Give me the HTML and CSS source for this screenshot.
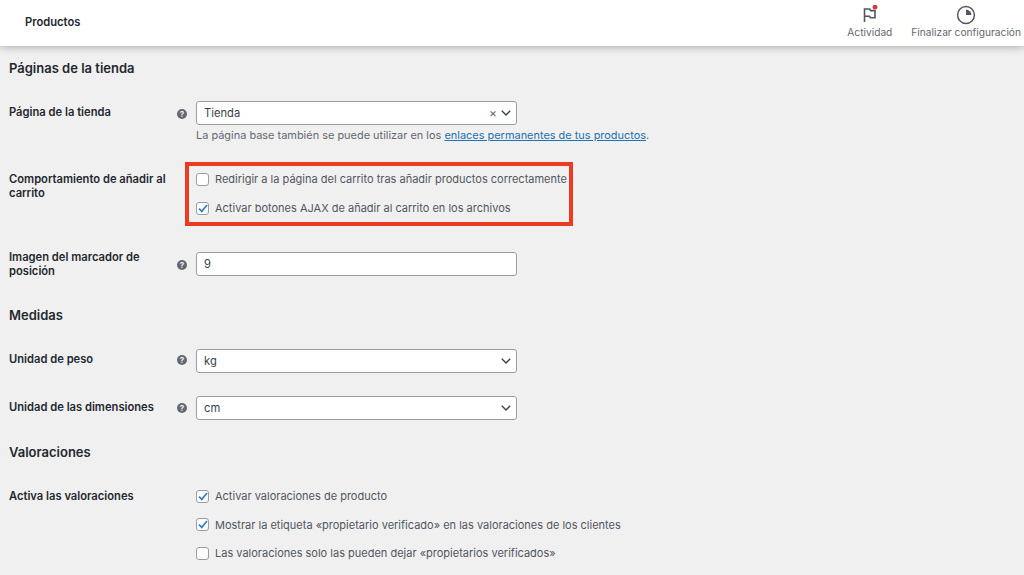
FILE: index.html
```html
<!DOCTYPE html>
<html lang="es">
<head>
<meta charset="utf-8">
<title>Productos</title>
<link rel="stylesheet" href="styles.css">
</head>
<body>
<header class="topbar">
  <h1 class="page-title">Productos</h1>
  <nav class="activity">
    <div class="activity-item item-a">
      <svg class="act-icon" width="20" height="20" viewBox="0 0 20 20" fill="none">
        <path d="M4.5 17V4h5.2l.8 1.6h4.5v7.2h-4.6l-.8-1.6H5" stroke="#50575e" stroke-width="1.6" fill="none"/>
        <circle cx="15" cy="2.2" r="2.4" fill="#d5383a"/>
      </svg>
      <span>Actividad</span>
    </div>
    <div class="activity-item item-b">
      <svg class="act-icon" width="20" height="20" viewBox="0 0 20 20" fill="none">
        <circle cx="10" cy="10" r="8.4" stroke="#50575e" stroke-width="1.5"/>
        <path d="M10 4.6a5.4 5.4 0 0 1 5.4 5.4H10z" fill="#50575e"/>
      </svg>
      <span>Finalizar configuración</span>
    </div>
  </nav>
</header>
<main class="content">
  <h2 class="section first">Páginas de la tienda</h2>
  <div class="row row-shop">
    <div class="label">Página de la tienda</div>
    <div class="help"><span class="help-icon">?</span></div>
    <div class="field">
      <div class="select"><span class="select-value">Tienda</span><span class="clear">×</span><svg class="chev" width="10" height="6" viewBox="0 0 10 6"><path d="M.8.8 5 5 9.2.8" stroke="#3c434a" stroke-width="1.4" fill="none"/></svg></div>
      <p class="desc">La página base también se puede utilizar en los <a href="#">enlaces permanentes de tus productos</a>.</p>
    </div>
  </div>
  <div class="row row-cart">
    <div class="label">Comportamiento de añadir al carrito</div>
    <div class="help"></div>
    <div class="field checks">
      <label class="check"><span class="box"></span>Redirigir a la página del carrito tras añadir productos correctamente</label>
      <label class="check"><span class="box on"><svg width="10" height="9" viewBox="0 0 10 9"><path d="M1 4.6 3.8 7.4 9 1" stroke="#3582c4" stroke-width="1.8" fill="none"/></svg></span>Activar botones AJAX de añadir al carrito en los archivos</label>
      <div class="highlight"></div>
    </div>
  </div>
  <div class="row row-image">
    <div class="label">Imagen del marcador de posición</div>
    <div class="help"><span class="help-icon">?</span></div>
    <div class="field"><div class="input">9</div></div>
  </div>
  <h2 class="section measures">Medidas</h2>
  <div class="row row-weight">
    <div class="label">Unidad de peso</div>
    <div class="help"><span class="help-icon">?</span></div>
    <div class="field"><div class="select"><span class="select-value">kg</span><svg class="chev" width="10" height="6" viewBox="0 0 10 6"><path d="M.8.8 5 5 9.2.8" stroke="#3c434a" stroke-width="1.4" fill="none"/></svg></div></div>
  </div>
  <div class="row row-dim">
    <div class="label">Unidad de las dimensiones</div>
    <div class="help"><span class="help-icon">?</span></div>
    <div class="field"><div class="select"><span class="select-value">cm</span><svg class="chev" width="10" height="6" viewBox="0 0 10 6"><path d="M.8.8 5 5 9.2.8" stroke="#3c434a" stroke-width="1.4" fill="none"/></svg></div></div>
  </div>
  <h2 class="section reviews">Valoraciones</h2>
  <div class="row row-reviews">
    <div class="label">Activa las valoraciones</div>
    <div class="help"></div>
    <div class="field checks checks-tight">
      <label class="check"><span class="box on"><svg width="10" height="9" viewBox="0 0 10 9"><path d="M1 4.6 3.8 7.4 9 1" stroke="#3582c4" stroke-width="1.8" fill="none"/></svg></span>Activar valoraciones de producto</label>
      <label class="check"><span class="box on"><svg width="10" height="9" viewBox="0 0 10 9"><path d="M1 4.6 3.8 7.4 9 1" stroke="#3582c4" stroke-width="1.8" fill="none"/></svg></span>Mostrar la etiqueta «propietario verificado» en las valoraciones de los clientes</label>
      <label class="check"><span class="box"></span>Las valoraciones solo las pueden dejar «propietarios verificados»</label>
    </div>
  </div>
</main>
</body>
</html>
```
FILE: styles.css
```css
* { box-sizing: border-box; }
html, body { margin: 0; height: 575px; overflow: hidden; }
body {
  background: #f0f0f1;
  color: #50575e;
  font-family: Inter, "Liberation Sans", sans-serif;
  font-size: 11px;
}
.topbar {
  height: 46px;
  background: #fff;
  display: flex;
  justify-content: space-between;
  box-shadow: 0 1px 8px rgba(0,0,0,.3);
  position: relative;
}
.page-title {
  margin: 0;
  padding: 15px 0 0 25px;
  font-size: 11.2px;
  line-height: 14px;
  font-weight: 600;
  color: #23282d;
}
.activity { display: flex; }
.activity-item {
  display: flex;
  flex-direction: column;
  align-items: center;
  padding-top: 5px;
  color: #646970;
  font-size: 10.2px;
  line-height: 14px;
}
.item-a { margin-right: 19px; }
.item-b { margin-right: 3px; }
.content { padding: 0 0 0 9px; }
.section {
  margin: 0;
  font-size: 13px;
  line-height: 16px;
  font-weight: 600;
  color: #23282d;
}
.first { padding-top: 14px; }
.measures { padding-top: 29px; }
.reviews { padding-top: 24px; }
.row { display: flex; align-items: flex-start; }
.label {
  width: 164px;
  font-size: 11.2px;
  font-weight: 600;
  color: #23282d;
  line-height: 14px;
  flex: none;
}
.help { width: 23px; flex: none; padding-top: 2px; }
.help-icon {
  display: block;
  width: 10px;
  height: 10px;
  margin-left: 4px;
  border-radius: 50%;
  background: #646970;
  color: #f0f0f1;
  font-size: 8px;
  line-height: 10px;
  font-weight: 700;
  text-align: center;
}
.field { flex: none; width: 700px; position: relative; }
.select, .input {
  width: 321px;
  height: 24px;
  background: #fff;
  border: 1px solid #9a9da2;
  border-radius: 3px;
  display: flex;
  align-items: center;
  padding: 0 5px 0 7px;
  font-size: 11.2px;
  color: #3c434a;
}
.select-value { flex: 1; }
.clear { color: #646970; font-size: 12px; margin-right: 4px; line-height: 1; }
.desc { margin: 3px 0 0; line-height: 14px; color: #646970; font-size: 10.95px; }
.desc a { color: #2271b1; }
.row-shop { padding-top: 25px; }
.row-shop .label { padding-top: 4px; }
.row-shop .help { padding-top: 8px; }
.row-cart { padding-top: 30px; }
.row-image { padding-top: 35px; }
.row-image .help { padding-top: 10px; }
.row-image .field { padding-top: 2px; }
.row-weight { padding-top: 26px; }
.row-weight .label { padding-top: 3px; }
.row-weight .help { padding-top: 6px; }
.row-dim { padding-top: 23px; }
.row-dim .label { padding-top: 4px; }
.row-dim .help { padding-top: 7px; }
.row-reviews { padding-top: 29px; }
.checks { display: flex; flex-direction: column; gap: 15px; }
.checks-tight { gap: 14.5px; }
.check { display: flex; align-items: center; height: 14px; line-height: 14px; }
.box {
  flex: none;
  width: 13px;
  height: 13px;
  margin-right: 6px;
  background: #fff;
  border: 1px solid #9a9da2;
  border-radius: 3px;
  display: flex;
  align-items: center;
  justify-content: center;
}
.highlight {
  position: absolute;
  left: -11px;
  top: -10px;
  width: 388px;
  height: 64px;
  border: 4px solid #ee3a21;
}
```
